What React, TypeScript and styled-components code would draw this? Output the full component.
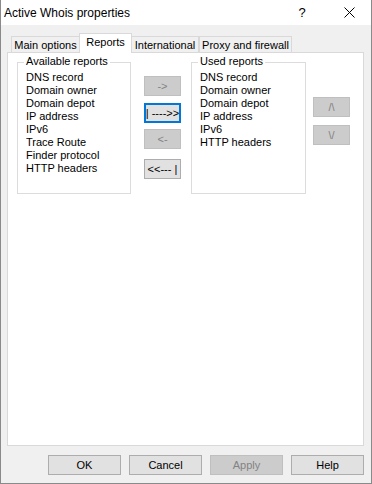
import React from 'react';
import styled, {createGlobalStyle} from 'styled-components';

const GlobalStyle = createGlobalStyle`
  html, body {
    margin: 0;
    padding: 0;
    background: #ffffff;
  }
  * {
    box-sizing: border-box;
  }
`;

const Window = styled.div`
  width: 372px;
  height: 484px;
  border: 1px solid #8a8a8a;
  border-top: none;
  background: #f0f0f0;
  display: flex;
  flex-direction: column;
  font-family: 'Liberation Sans', Arial, sans-serif;
  font-size: 11px;
  color: #000;
  overflow: hidden;
`;

const TitleBar = styled.div`
  height: 25px;
  background: #ffffff;
  display: flex;
  align-items: center;
  padding-left: 3px;
  flex-shrink: 0;
`;

const Title = styled.div`
  flex: 1;
  font-size: 12px;
  line-height: 14px;
  padding-top: 1px;
`;

const HelpGlyph = styled.div`
  width: 40px;
  text-align: center;
  font-size: 13px;
  line-height: 14px;
  margin-right: 3px;
  padding-top: 1px;
`;

const CloseButton = styled.div`
  width: 46px;
  height: 25px;
  display: flex;
  align-items: center;
  justify-content: center;
  padding-left: 3px;
`;

const Body = styled.div`
  flex: 1;
  display: flex;
  flex-direction: column;
  padding: 8px 7px 9px 6px;
`;

const TabStrip = styled.div`
  display: flex;
  align-items: flex-end;
  height: 20px;
  padding-left: 4px;
  position: relative;
  z-index: 1;
`;

const Tab = styled.div<{$active?: boolean; $width: number}>`
  width: ${p => p.$width}px;
  height: ${p => (p.$active ? 20 : 17)}px;
  background: ${p => (p.$active ? '#ffffff' : '#f0f0f0')};
  border: 1px solid #d9d9d9;
  border-bottom: ${p => (p.$active ? 'none' : '1px solid #d9d9d9')};
  margin: 0 ${p => (p.$active ? -1 : 0)}px;
  display: flex;
  justify-content: center;
  padding-top: 2px;
  line-height: 13px;
  white-space: nowrap;
`;

const Panel = styled.div`
  height: 394px;
  margin-top: -1px;
  background: #ffffff;
  border: 1px solid #d9d9d9;
  display: flex;
  align-items: flex-start;
  padding: 9px 0 0 9px;
`;

const GroupBox = styled.div<{$width: number; $left?: number}>`
  position: relative;
  width: ${p => p.$width}px;
  height: 132px;
  margin-left: ${p => p.$left ?? 0}px;
  border: 1px solid #dcdcdc;
  padding: 8px 0 0 8px;
  flex-shrink: 0;
`;

const GroupLabel = styled.span`
  position: absolute;
  top: -8px;
  left: 6px;
  padding: 0 2px;
  background: #ffffff;
  line-height: 13px;
  white-space: nowrap;
`;

const Item = styled.div`
  line-height: 13px;
  white-space: nowrap;
`;

const ButtonColumn = styled.div<{$top: number; $left: number}>`
  display: flex;
  flex-direction: column;
  margin-top: ${p => p.$top}px;
  margin-left: ${p => p.$left}px;
`;

const SmallButton = styled.div<{$disabled?: boolean; $focused?: boolean; $gap?: number}>`
  width: 37px;
  height: 20px;
  margin-top: ${p => p.$gap ?? 0}px;
  background: ${p => (p.$disabled ? '#cccccc' : '#e1e1e1')};
  border: ${p =>
    p.$focused
      ? '2px solid #0078d7'
      : p.$disabled
      ? '1px solid #bfbfbf'
      : '1px solid #adadad'};
  color: ${p => (p.$disabled ? '#838383' : '#000')};
  display: flex;
  align-items: center;
  justify-content: center;
  line-height: 13px;
  white-space: pre;
`;

const Footer = styled.div`
  display: flex;
  justify-content: flex-end;
  gap: 8px;
  margin-top: 9px;
`;

const DialogButton = styled.div<{$disabled?: boolean}>`
  width: 73px;
  height: 20px;
  background: ${p => (p.$disabled ? '#cccccc' : '#e1e1e1')};
  border: 1px solid ${p => (p.$disabled ? '#bfbfbf' : '#adadad')};
  color: ${p => (p.$disabled ? '#838383' : '#000')};
  display: flex;
  align-items: center;
  justify-content: center;
`;

const available = [
  'DNS record',
  'Domain owner',
  'Domain depot',
  'IP address',
  'IPv6',
  'Trace Route',
  'Finder protocol',
  'HTTP headers',
];

const used = ['DNS record', 'Domain owner', 'Domain depot', 'IP address', 'IPv6', 'HTTP headers'];

const tabs = [
  {label: 'Main options', width: 69},
  {label: 'Reports', width: 53, active: true},
  {label: 'International', width: 68},
  {label: 'Proxy and firewall', width: 93},
];

export default function App() {
  return (
    <>
      <GlobalStyle />
      <Window>
        <TitleBar>
          <Title>Active Whois properties</Title>
          <HelpGlyph>?</HelpGlyph>
          <CloseButton>
            <svg width="11" height="11" viewBox="0 0 11 11">
              <path d="M0.5 0.5 L10.5 10.5 M10.5 0.5 L0.5 10.5" stroke="#000" strokeWidth="1" />
            </svg>
          </CloseButton>
        </TitleBar>
        <Body>
          <TabStrip>
            {tabs.map(t => (
              <Tab key={t.label} $active={t.active} $width={t.width}>
                {t.label}
              </Tab>
            ))}
          </TabStrip>
          <Panel>
            <GroupBox $width={114}>
              <GroupLabel>Available reports</GroupLabel>
              {available.map(a => (
                <Item key={a}>{a}</Item>
              ))}
            </GroupBox>
            <ButtonColumn $top={14} $left={13}>
              <SmallButton $disabled>-&gt;</SmallButton>
              <SmallButton $focused $gap={7}>| ----&gt;&gt;</SmallButton>
              <SmallButton $disabled $gap={6}>&lt;-</SmallButton>
              <SmallButton $gap={10}>&lt;&lt;--- |</SmallButton>
            </ButtonColumn>
            <GroupBox $width={115} $left={10}>
              <GroupLabel>Used reports</GroupLabel>
              {used.map(u => (
                <Item key={u}>{u}</Item>
              ))}
            </GroupBox>
            <ButtonColumn $top={35} $left={7}>
              <SmallButton $disabled>/\</SmallButton>
              <SmallButton $disabled $gap={8}>\/</SmallButton>
            </ButtonColumn>
          </Panel>
          <Footer>
            <DialogButton>OK</DialogButton>
            <DialogButton>Cancel</DialogButton>
            <DialogButton $disabled>Apply</DialogButton>
            <DialogButton>Help</DialogButton>
          </Footer>
        </Body>
      </Window>
    </>
  );
}
